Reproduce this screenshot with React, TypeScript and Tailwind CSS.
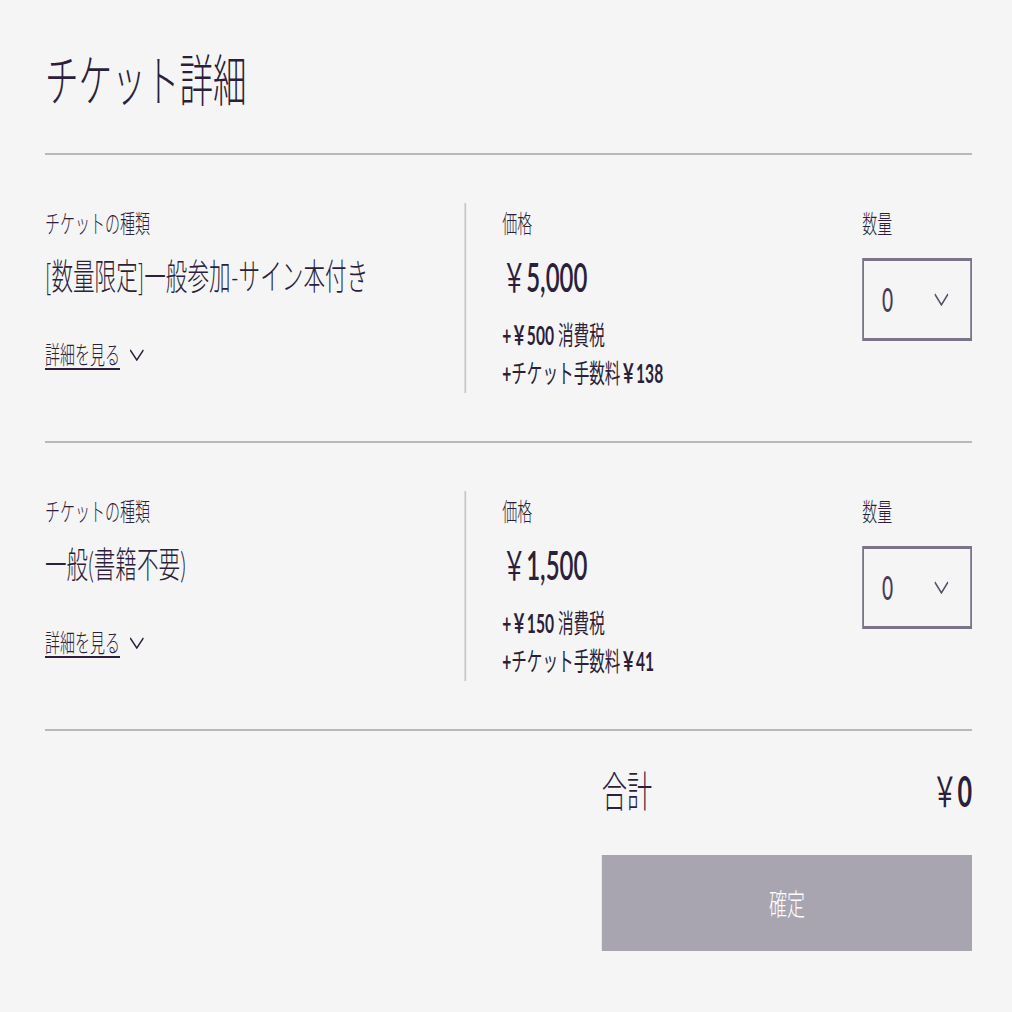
import React from 'react';

type Ticket = {
  name: string;
  price: string;
  tax: string;
  fee: string;
};

const tickets: Ticket[] = [
  { name: '[数量限定]一般参加-サイン本付き', price: '5,000', tax: '500', fee: '138' },
  { name: '一般(書籍不要)', price: '1,500', tax: '150', fee: '41' },
];

const Chevron: React.FC<{ className?: string }> = ({ className }) => (
  <svg viewBox="0 0 24 12" preserveAspectRatio="none" className={className} fill="none" stroke="currentColor" strokeWidth={2}>
    <polyline points="1,1 12,11 23,1" />
  </svg>
);

const TicketRow: React.FC<{ ticket: Ticket }> = ({ ticket }) => (
  <div className="flex py-[48px]">
    <div className="w-[702px] h-[190px] border-r-[3px] border-[#c9c7cc] pt-[8px]">
      <div className="text-[25px] leading-none font-light">チケットの種類</div>
      <div className="mt-[22px] text-[36px] leading-none font-light">{ticket.name}</div>
      <div className="mt-[48px] flex items-center gap-[16px] text-[25px] leading-none font-light">
        <span className="underline underline-offset-[4px] decoration-[2px]">詳細を見る</span>
        <Chevron className="w-[24px] h-[12px]" />
      </div>
    </div>
    <div className="flex-1 flex pl-[60px] pt-[8px]">
      <div className="flex-1">
        <div className="text-[25px] leading-none font-light">価格</div>
        <div className="mt-[21px] text-[40px] leading-none font-semibold">
          <span className="font-normal">￥</span>{ticket.price}
        </div>
        <div className="mt-[25px] text-[26px] leading-none">
          <span className="font-bold">+￥{ticket.tax}</span> 消費税
        </div>
        <div className="mt-[12px] text-[26px] leading-none">
          <span className="font-bold">+</span>チケット手数料<span className="font-bold">￥{ticket.fee}</span>
        </div>
      </div>
      <div className="w-[183px]">
        <div className="text-[25px] leading-none font-light">数量</div>
        <div className="mt-[22px] h-[83px] border-[3px] border-[#7b7388] flex items-center justify-between pl-[30px] pr-[36px]">
          <span className="text-[32px] leading-none font-medium text-[#463b58]">0</span>
          <Chevron className="w-[24px] h-[13px] text-[#5b5068]" />
        </div>
      </div>
    </div>
  </div>
);

export default function App() {
  return (
    <div className="w-[1012px] h-[1012px] overflow-hidden bg-[#f5f5f5]">
      <div className="w-[1687px] origin-top-left scale-x-[0.6] pl-[75px] pr-[67px] text-[#2b1f3c] font-['Lato','Noto_Sans_CJK_JP',sans-serif]">
        <h1 className="pt-[52px] text-[56px] leading-none font-light">チケット詳細</h1>
        <div className="mt-[45px] h-[2px] bg-[#bab8be]" />
        {tickets.map((t, i) => (
          <React.Fragment key={i}>
            <TicketRow ticket={t} />
            <div className="h-[2px] bg-[#bab8be]" />
          </React.Fragment>
        ))}
        <div className="ml-auto w-[617px] pt-[39px]">
          <div className="flex items-center justify-between text-[42px] leading-none">
            <span className="font-light">合計</span>
            <span className="font-bold"><span className="font-normal">￥</span>0</span>
          </div>
          <button className="mt-[43px] w-full h-[96px] bg-[#a8a5b0] text-white text-[30px] leading-none font-light flex items-center justify-center">
            確定
          </button>
        </div>
      </div>
    </div>
  );
}
